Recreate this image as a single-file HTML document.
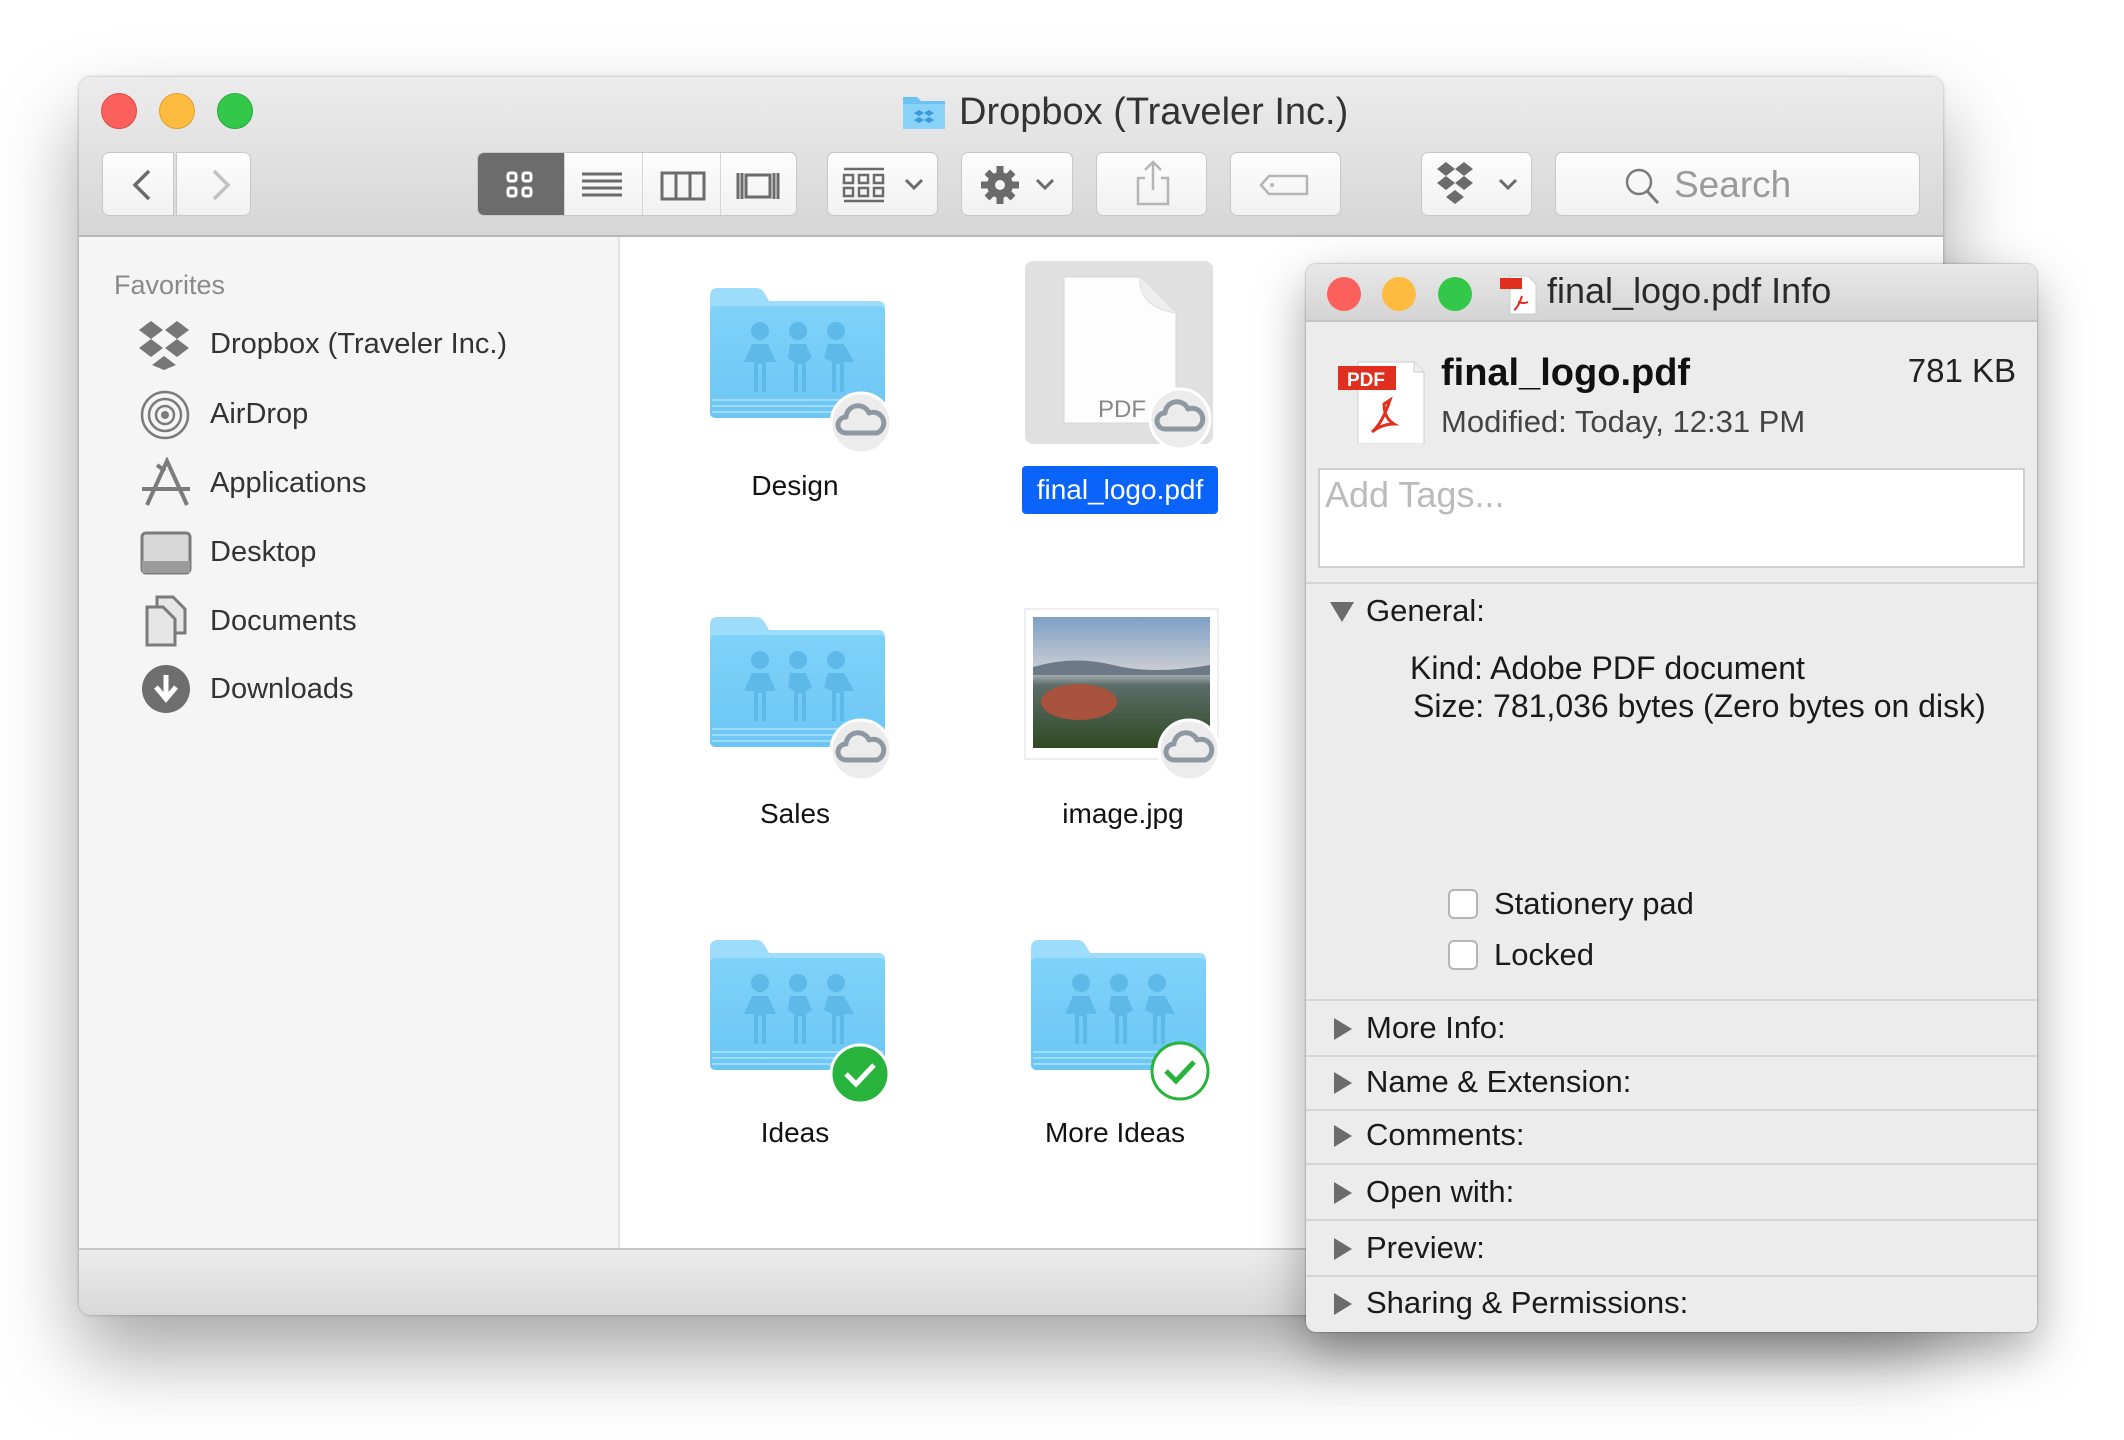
<!DOCTYPE html>
<html><head><meta charset="utf-8"><style>
*{margin:0;padding:0;box-sizing:border-box}
body{width:2124px;height:1440px;background:#fff;font-family:"Liberation Sans",sans-serif;position:relative;overflow:hidden;color:#1a1a1a}
.a{position:absolute}
.win{left:79px;top:77px;width:1864px;height:1238px;border-radius:12px;background:#fff;box-shadow:0 40px 80px rgba(0,0,0,.35),0 0 3px rgba(0,0,0,.3);overflow:hidden}
.tb{left:0;top:0;width:1864px;height:160px;background:linear-gradient(#ececec,#d6d6d6);border-bottom:2px solid #b8b8b8}
.dot{width:36px;height:36px;border-radius:50%}
.btn{background:linear-gradient(#fdfdfd,#f1f1f1);border:1px solid #c8c8c8;border-radius:7px;height:64px;top:75px}
.side{left:0;top:160px;width:541px;height:1011px;background:#f5f5f5;border-right:2px solid #e3e3e3}
.si{font-size:29px;color:#333;left:131px}
.bot{left:0;top:1171px;width:1864px;height:67px;background:linear-gradient(#ececec,#d8d8d8);border-top:2px solid #c8c8c8}
.lbl{font-size:28px;color:#111;text-align:center;width:300px}
.info{left:1306px;top:264px;width:731px;height:1068px;background:#ececec;border-radius:10px;box-shadow:0 20px 50px rgba(0,0,0,.35),0 0 2px rgba(0,0,0,.4);overflow:hidden}
.it{font-size:31px;color:#1a1a1a}
.sep{left:0;width:731px;height:2px;background:#d5d5d5}
.tri{width:0;height:0;border-top:11px solid transparent;border-bottom:11px solid transparent;border-left:18px solid #6b6b6b}
.cb{width:30px;height:30px;border:2px solid #b5b5b5;border-radius:6px;background:#fff}
</style></head><body>

<div class="a win">
 <div class="a tb">
  <div class="a dot" style="left:22px;top:16px;background:#fc605c;border:1px solid #de4a45"></div>
  <div class="a dot" style="left:80px;top:16px;background:#fdbc40;border:1px solid #de9f2f"></div>
  <div class="a dot" style="left:138px;top:16px;background:#34c84a;border:1px solid #27a83a"></div>
  <svg class="a" style="left:822px;top:16px" width="46" height="38" viewBox="0 0 46 38"><path d="M2 4h14l4 4h24v28H2z" fill="#6cc3f2"/><path d="M2 11h42v25H2z" fill="#89d2f8"/><path d="M18 17l5 3-5 3-5-3zM28 17l5 3-5 3-5-3zM18 24l5 3-5 3-5-3zM28 24l5 3-5 3-5-3z" fill="#3a9ad9"/></svg>
  <div class="a" style="left:880px;top:14px;font-size:38px;color:#333">Dropbox (Traveler Inc.)</div>
  <div class="a btn" style="left:23px;width:72px;border-radius:7px 0 0 7px"></div>
  <div class="a btn" style="left:97px;width:75px;border-radius:0 7px 7px 0"></div>
  <svg class="a" style="left:40px;top:88px" width="120" height="40"><path d="M30 6L16 20l14 14" stroke="#6b6b6b" stroke-width="3.5" fill="none"/><path d="M95 6l14 14-14 14" stroke="#c2c2c2" stroke-width="3.5" fill="none"/></svg>
  <div class="a btn" style="left:398px;width:320px;overflow:hidden">
   <div class="a" style="left:0;top:0;width:86px;height:64px;background:#6c6c6c"></div>
   <div class="a" style="left:164px;top:0;width:1px;height:64px;background:#d6d6d6"></div>
   <div class="a" style="left:242px;top:0;width:1px;height:64px;background:#d6d6d6"></div>
   <div class="a" style="left:86px;top:0;width:1px;height:64px;background:#d6d6d6"></div>
   <svg class="a" style="left:0;top:0" width="320" height="64"><g fill="none" stroke="#fff" stroke-width="3"><rect x="30" y="20" width="8" height="8" rx="2"/><rect x="45" y="20" width="8" height="8" rx="2"/><rect x="30" y="35" width="8" height="8" rx="2"/><rect x="45" y="35" width="8" height="8" rx="2"/></g><g stroke="#6b6b6b" stroke-width="3" fill="none"><path d="M104 21h40M104 28h40M104 35h40M104 42h40"/><rect x="184" y="20" width="42" height="26"/><path d="M198 20v26M212 20v26"/><rect x="268" y="22" width="24" height="22"/><path d="M260 20v26M264 20v26M296 20v26M300 20v26"/></g></svg>
  </div>
  <div class="a btn" style="left:748px;width:111px"><svg width="111" height="64"><g stroke="#6b6b6b" stroke-width="2.5" fill="none"><path d="M16 16h40M16 48h40"/><rect x="16" y="22" width="9" height="8"/><rect x="31" y="22" width="9" height="8"/><rect x="46" y="22" width="9" height="8"/><rect x="16" y="35" width="9" height="8"/><rect x="31" y="35" width="9" height="8"/><rect x="46" y="35" width="9" height="8"/><path d="M78 27l8 8 8-8" stroke-width="3"/></g></svg></div>
  <div class="a btn" style="left:882px;width:112px"><svg width="112" height="64"><g fill="#6b6b6b"><circle cx="38" cy="32" r="13"/><g stroke="#6b6b6b" stroke-width="7"><path d="M38 13v38M19 32h38M25 19l26 26M51 19L25 45"/></g></g><circle cx="38" cy="32" r="5" fill="#f5f5f5"/><path d="M75 27l8 8 8-8" stroke="#6b6b6b" stroke-width="3" fill="none"/></svg></div>
  <div class="a btn" style="left:1017px;width:111px"><svg width="111" height="64"><g stroke="#b5b5b5" stroke-width="2.5" fill="none"><path d="M48 25h-7v26h30V25h-7"/><path d="M56 9v28M48 17l8-8 8 8"/></g></svg></div>
  <div class="a btn" style="left:1151px;width:111px"><svg width="111" height="64"><path d="M38 23h38v18H38l-8-9z" stroke="#b5b5b5" stroke-width="2.5" fill="none" stroke-linejoin="round"/><circle cx="41" cy="32" r="2" fill="#b5b5b5"/></svg></div>
  <div class="a btn" style="left:1342px;width:111px"><svg width="111" height="64"><path d="M24 9l9 7-9 7-9-7zM42 9l9 7-9 7-9-7zM24 23l9 7-9 7-9-7zM42 23l9 7-9 7-9-7zM33 37l9 7-9 7-9-7z" fill="#6b6b6b"/><path d="M78 27l8 8 8-8" stroke="#6b6b6b" stroke-width="3" fill="none"/></svg></div>
  <div class="a btn" style="left:1476px;width:365px"><svg class="a" style="left:66px;top:13px" width="40" height="40"><circle cx="17" cy="16" r="12" stroke="#7a7a7a" stroke-width="2.5" fill="none"/><path d="M25 25l11 12" stroke="#7a7a7a" stroke-width="3"/></svg><div class="a" style="left:118px;top:11px;font-size:37px;color:#9a9a9a">Search</div></div>
 </div>

 <div class="a side">
  <div class="a" style="left:35px;top:33px;font-size:27px;color:#8a8a8a">Favorites</div>
  <svg class="a" style="left:58px;top:82px" width="60" height="52"><path d="M14 2l12 9-12 9-12-9zM40 2l12 9-12 9-12-9zM14 20l12 9-12 9-12-9zM40 20l12 9-12 9-12-9zM27 37l12 9-12 5-12-5z" fill="#777"/></svg>
  <div class="a si" style="top:91px">Dropbox (Traveler Inc.)</div>
  <svg class="a" style="left:60px;top:152px" width="52" height="52"><g stroke="#7b7b7b" stroke-width="2.5" fill="none"><circle cx="26" cy="26" r="23"/><circle cx="26" cy="26" r="16"/><circle cx="26" cy="26" r="9"/></g><circle cx="26" cy="26" r="4" fill="#7b7b7b"/></svg>
  <div class="a si" style="top:161px">AirDrop</div>
  <svg class="a" style="left:60px;top:220px" width="54" height="52"><g stroke="#7b7b7b" stroke-width="4" fill="none"><path d="M8 48L28 4l20 44M3 32h48M18 8l8 6"/></g></svg>
  <div class="a si" style="top:230px">Applications</div>
  <svg class="a" style="left:61px;top:294px" width="52" height="44"><rect x="2" y="2" width="48" height="40" rx="4" fill="#d8d8d8" stroke="#7b7b7b" stroke-width="3"/><rect x="2" y="30" width="48" height="12" fill="#9b9b9b"/></svg>
  <div class="a si" style="top:299px">Desktop</div>
  <svg class="a" style="left:64px;top:358px" width="46" height="52"><path d="M14 2h16l12 12v24H14z" fill="#e6e6e6" stroke="#7b7b7b" stroke-width="3"/><path d="M4 12h16l12 12v26H4z" fill="#e6e6e6" stroke="#7b7b7b" stroke-width="3"/></svg>
  <div class="a si" style="top:368px">Documents</div>
  <svg class="a" style="left:61px;top:426px" width="52" height="52"><circle cx="26" cy="26" r="24" fill="#6e6e6e"/><path d="M26 12v20M16 24l10 12 10-12" stroke="#fff" stroke-width="5" fill="none"/></svg>
  <div class="a si" style="top:436px">Downloads</div>
 </div>

 <svg class="a" style="left:0;top:0" width="1864" height="1238">
  <defs><linearGradient id="fg" x1="0" y1="0" x2="0" y2="1"><stop offset="0" stop-color="#7fd2f9"/><stop offset="1" stop-color="#6cc6f4"/></linearGradient>
  <g id="fold"><path d="M0 8q0-8 8-8h38q6 0 9 6l4 7h109q7 0 7 7v102H0z" fill="#9ddcfa"/><rect x="0" y="18" width="175" height="112" rx="5" fill="url(#fg)"/><path d="M2 112h171M2 118h171M2 124h171" stroke="#9fdcf9" stroke-width="2"/><g fill="#5eb8e8"><circle cx="50" cy="43" r="9"/><circle cx="88" cy="43" r="9"/><circle cx="126" cy="43" r="9"/><path d="M42 56h16l8 18-10 0v30h-4v-28h-4v28h-4V74h-10zM80 56h16l6 14-6 4v30h-4v-28h-4v28h-4V74l-6-4zM118 56h16l10 18h-10v30h-4v-28h-4v28h-4V74l-8-4z"/></g></g>
  <g id="cloud"><circle r="30" fill="#ececec" stroke="#fff" stroke-width="3"/><path d="M-15 10a8 8 0 0 1 0-16a12 12 0 0 1 23-4a9 9 0 0 1 8 20z" stroke="#8e98a3" stroke-width="5" fill="none" stroke-linejoin="round"/></g>
  <linearGradient id="sky" x1="0" y1="0" x2="0" y2="1"><stop offset="0" stop-color="#7ea0c6"/><stop offset=".4" stop-color="#c9ccd2"/><stop offset=".52" stop-color="#5c6d6a"/><stop offset="1" stop-color="#2f4a22"/></linearGradient>
  </defs>
  <use href="#fold" x="631" y="211"/>
  <use href="#fold" x="631" y="540"/>
  <use href="#fold" x="631" y="863"/>
  <use href="#fold" x="952" y="863"/>
  <rect x="946" y="184" width="188" height="183" rx="8" fill="#e0e0e0"/>
  <path d="M985 200h76l36 36v110H985z" fill="#fdfdfd" stroke="#d6d6d6"/>
  <path d="M1061 200q-2 30 36 36" fill="#eee" stroke="#ddd"/>
  <text x="1019" y="340" font-family="Liberation Sans" font-size="24" fill="#888">PDF</text>
  <rect x="946" y="532" width="193" height="150" fill="#fff" stroke="#ddd"/>
  <rect x="954" y="540" width="177" height="131" fill="url(#sky)"/>
  <ellipse cx="1000" cy="625" rx="38" ry="18" fill="#a9523d"/>
  <path d="M954 590q40-12 80-2t97 0v10H954z" fill="#6b7a86"/>
 </svg>
 <svg class="a" style="left:0;top:0" width="1864" height="1238">
  <use href="#cloud" x="782" y="346"/>
  <use href="#cloud" x="1101" y="342"/>
  <use href="#cloud" x="782" y="673"/>
  <use href="#cloud" x="1110" y="673"/>
  <circle cx="781" cy="997" r="29" fill="#28b43c" stroke="#fff" stroke-width="3"/>
  <path d="M767 997l10 10 18-19" stroke="#fff" stroke-width="5" fill="none"/>
  <circle cx="1101" cy="994" r="28" fill="#fff" stroke="#28b43c" stroke-width="3"/>
  <path d="M1087 994l10 10 18-19" stroke="#28b43c" stroke-width="5" fill="none"/>
 </svg>
 <div class="a lbl" style="left:566px;top:393px">Design</div>
 <div class="a" style="left:943px;top:389px;width:196px;height:48px;background:#0a64fa;border-radius:4px;color:#fff;font-size:28px;text-align:center;line-height:48px">final_logo.pdf</div>
 <div class="a lbl" style="left:566px;top:721px">Sales</div>
 <div class="a lbl" style="left:894px;top:721px">image.jpg</div>
 <div class="a lbl" style="left:566px;top:1040px">Ideas</div>
 <div class="a lbl" style="left:886px;top:1040px">More Ideas</div>

 <div class="a bot"></div>
</div>

<div class="a info">
 <div class="a" style="left:0;top:0;width:731px;height:58px;background:linear-gradient(#e8e8e8,#d4d4d4);border-bottom:2px solid #c4c4c4"></div>
 <div class="a dot" style="left:21px;top:13px;width:34px;height:34px;background:#fc605c"></div>
 <div class="a dot" style="left:76px;top:13px;width:34px;height:34px;background:#fdbc40"></div>
 <div class="a dot" style="left:132px;top:13px;width:34px;height:34px;background:#34c84a"></div>
 <svg class="a" style="left:192px;top:8px" width="44" height="44"><path d="M12 4h18l8 8v30H12z" fill="#fff" stroke="#ccc"/><rect x="2" y="6" width="22" height="11" fill="#e02f1e"/><path d="M24 24q-4 12-8 14M20 30q6 2 10 0" stroke="#e02f1e" stroke-width="2" fill="none"/></svg>
 <div class="a" style="left:241px;top:6px;font-size:36px;color:#2a2a2a">final_logo.pdf Info</div>
 <svg class="a" style="left:32px;top:90px" width="90" height="90"><path d="M20 8h56l10 10v72H20z" fill="#fff" stroke="#ccc"/><path d="M76 8v10h10" fill="#eee" stroke="#ccc"/><rect x="0" y="12" width="58" height="24" fill="#e02f1e"/><text x="9" y="32" font-family="Liberation Sans" font-weight="bold" font-size="19" fill="#fff">PDF</text><path d="M52 46q-8 24-18 32q10-8 22-8q-10-6-10-20z" stroke="#e02f1e" stroke-width="3" fill="none"/></svg>
 <div class="a" style="left:135px;top:88px;font-size:38px;font-weight:bold;color:#111">final_logo.pdf</div>
 <div class="a" style="right:21px;top:88px;font-size:33px;color:#222">781 KB</div>
 <div class="a" style="left:135px;top:140px;font-size:31px;color:#444">Modified: Today, 12:31 PM</div>
 <div class="a" style="left:12px;top:204px;width:707px;height:100px;background:#fff;border:2px solid #cfcfcf"></div>
 <div class="a" style="left:19px;top:210px;font-size:36px;color:#bbb">Add Tags...</div>
 <div class="a sep" style="top:318px"></div>
 <div class="a" style="left:24px;top:338px;width:0;height:0;border-left:12px solid transparent;border-right:12px solid transparent;border-top:20px solid #6b6b6b"></div>
 <div class="a it" style="left:60px;top:329px">General:</div>
 <div class="a it" style="left:104px;top:386px;font-size:32px">Kind: Adobe PDF document</div>
 <div class="a it" style="left:107px;top:424px;font-size:32px">Size: 781,036 bytes (Zero bytes on disk)</div>
 <div class="a cb" style="left:142px;top:625px"></div>
 <div class="a it" style="left:188px;top:622px">Stationery pad</div>
 <div class="a cb" style="left:142px;top:676px"></div>
 <div class="a it" style="left:188px;top:673px">Locked</div>
 <div class="a sep" style="top:735px"></div>
 <div class="a tri" style="left:28px;top:754px"></div><div class="a it" style="left:60px;top:746px">More Info:</div>
 <div class="a sep" style="top:791px"></div>
 <div class="a tri" style="left:28px;top:808px"></div><div class="a it" style="left:60px;top:800px">Name &amp; Extension:</div>
 <div class="a sep" style="top:845px"></div>
 <div class="a tri" style="left:28px;top:861px"></div><div class="a it" style="left:60px;top:853px">Comments:</div>
 <div class="a sep" style="top:899px"></div>
 <div class="a tri" style="left:28px;top:918px"></div><div class="a it" style="left:60px;top:910px">Open with:</div>
 <div class="a sep" style="top:955px"></div>
 <div class="a tri" style="left:28px;top:974px"></div><div class="a it" style="left:60px;top:966px">Preview:</div>
 <div class="a sep" style="top:1011px"></div>
 <div class="a tri" style="left:28px;top:1029px"></div><div class="a it" style="left:60px;top:1021px">Sharing &amp; Permissions:</div>
</div>
</body></html>
